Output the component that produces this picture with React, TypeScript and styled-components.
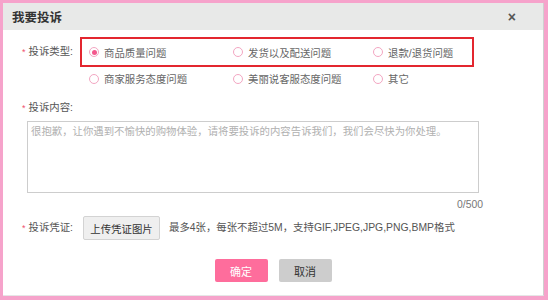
import React, { useState } from 'react'
import styled, { createGlobalStyle } from 'styled-components'

const GlobalStyle = createGlobalStyle`
  body {
    margin: 0;
    font-family: "Liberation Sans", "Noto Sans CJK SC", sans-serif;
  }
`

const Frame = styled.div`
  box-sizing: border-box;
  width: 548px;
  height: 300px;
  border: 3px solid #f6a3cb;
  border-right-width: 4px;
  border-bottom-width: 4px;
  background: #fff;
`

const Dialog = styled.div`
  box-sizing: border-box;
  height: 100%;
  border-right: 1px solid #cfcfcf;
  border-bottom: 1px solid #e6e6e6;
  display: flex;
  flex-direction: column;
`

const Header = styled.div`
  height: 27px;
  flex-shrink: 0;
  display: flex;
  align-items: center;
  justify-content: space-between;
  padding: 0 27px 0 9px;
  background: #e8e9e8;
`

const Title = styled.div`
  font-size: 12.5px;
  font-weight: bold;
  color: #333;
`

const Close = styled.div`
  font-size: 14px;
  font-weight: bold;
  color: #555;
  line-height: 1;
  cursor: pointer;
`

const Body = styled.div`
  padding: 7px 0 0 19px;
  font-size: 10.4px;
  color: #555;
`

const FieldRow = styled.div<{ $top?: number }>`
  display: flex;
  align-items: flex-start;
  margin-top: ${(p) => p.$top ?? 0}px;
`

const Label = styled.div<{ $width?: number; $height?: number }>`
  width: ${(p) => (p.$width ? `${p.$width}px` : 'auto')};
  height: ${(p) => p.$height ?? 14}px;
  line-height: ${(p) => p.$height ?? 14}px;
  color: #555;
  white-space: nowrap;
  flex-shrink: 0;
`

const Star = styled.span`
  color: #f0506e;
  font-size: 9px;
  margin-right: 3px;
  vertical-align: top;
`

const Options = styled.div`
  display: flex;
  flex-direction: column;
`

const OptionRow = styled.div<{ $boxed?: boolean }>`
  box-sizing: border-box;
  width: 394px;
  height: ${(p) => (p.$boxed ? 30 : 23)}px;
  border: 2px solid ${(p) => (p.$boxed ? '#e3262f' : 'transparent')};
  display: grid;
  grid-template-columns: 144px 140px 1fr;
  align-items: center;
  padding-left: 7px;
`

const Option = styled.label`
  display: flex;
  align-items: center;
  gap: 5px;
  color: #666;
  cursor: pointer;
  white-space: nowrap;
`

const Radio = styled.span<{ $checked: boolean }>`
  box-sizing: border-box;
  width: 10px;
  height: 10px;
  border-radius: 50%;
  border: 1px solid #f3a6c2;
  display: flex;
  align-items: center;
  justify-content: center;

  &::after {
    content: '';
    width: 5px;
    height: 5px;
    border-radius: 50%;
    background: ${(p) => (p.$checked ? '#f3588c' : 'transparent')};
  }
`

const TextArea = styled.textarea`
  box-sizing: border-box;
  display: block;
  width: 452px;
  height: 72px;
  margin: 6px 0 0 5px;
  padding: 3px 3px;
  border: 1px solid #cdcdcd;
  resize: none;
  outline: none;
  font-family: inherit;
  font-size: 10.4px;
  line-height: 14px;
  color: #555;

  &::placeholder {
    color: #b0b0b0;
  }
`

const Counter = styled.div`
  width: 461px;
  margin-top: 5px;
  text-align: right;
  line-height: 14px;
  color: #777;
`

const UploadButton = styled.button`
  box-sizing: border-box;
  width: 77px;
  height: 24px;
  border: 1px solid #d3d3d3;
  border-radius: 2px;
  background: #efefef;
  font-family: inherit;
  font-size: 10.4px;
  color: #333;
  cursor: pointer;
`

const Note = styled.div`
  margin-left: 9px;
  line-height: 24px;
  color: #555;
  white-space: nowrap;
`

const Footer = styled.div`
  display: flex;
  justify-content: center;
  gap: 11px;
  margin-top: 19px;
`

const ActionButton = styled.button<{ $primary?: boolean }>`
  width: 53px;
  height: 23px;
  border: none;
  border-radius: 2px;
  background: ${(p) => (p.$primary ? '#fe6d9c' : '#cdcdcd')};
  color: ${(p) => (p.$primary ? '#fff' : '#333')};
  font-family: inherit;
  font-size: 11px;
  cursor: pointer;
`

const rows = [
  ['商品质量问题', '发货以及配送问题', '退款/退货问题'],
  ['商家服务态度问题', '美丽说客服态度问题', '其它'],
]

export default function App() {
  const [type, setType] = useState('商品质量问题')
  const [content, setContent] = useState('')

  return (
    <>
      <GlobalStyle />
      <Frame>
        <Dialog>
          <Header>
            <Title>我要投诉</Title>
            <Close>×</Close>
          </Header>
          <Body>
            <FieldRow>
              <Label $width={58} $height={30}>
                <Star>*</Star>投诉类型:
              </Label>
              <Options>
                {rows.map((row, i) => (
                  <OptionRow key={i} $boxed={i === 0}>
                    {row.map((name) => (
                      <Option key={name} onClick={() => setType(name)}>
                        <Radio $checked={type === name} />
                        {name}
                      </Option>
                    ))}
                  </OptionRow>
                ))}
              </Options>
            </FieldRow>

            <FieldRow $top={11}>
              <Label>
                <Star>*</Star>投诉内容:
              </Label>
            </FieldRow>
            <TextArea
              value={content}
              maxLength={500}
              onChange={(e) => setContent(e.target.value)}
              placeholder="很抱歉，让你遇到不愉快的购物体验，请将要投诉的内容告诉我们，我们会尽快为你处理。"
            />
            <Counter>{content.length}/500</Counter>

            <FieldRow $top={4}>
              <Label $width={61} $height={24}>
                <Star>*</Star>投诉凭证:
              </Label>
              <UploadButton>上传凭证图片</UploadButton>
              <Note>最多4张，每张不超过5M，支持GIF,JPEG,JPG,PNG,BMP格式</Note>
            </FieldRow>
          </Body>
          <Footer>
            <ActionButton $primary>确定</ActionButton>
            <ActionButton>取消</ActionButton>
          </Footer>
        </Dialog>
      </Frame>
    </>
  )
}
